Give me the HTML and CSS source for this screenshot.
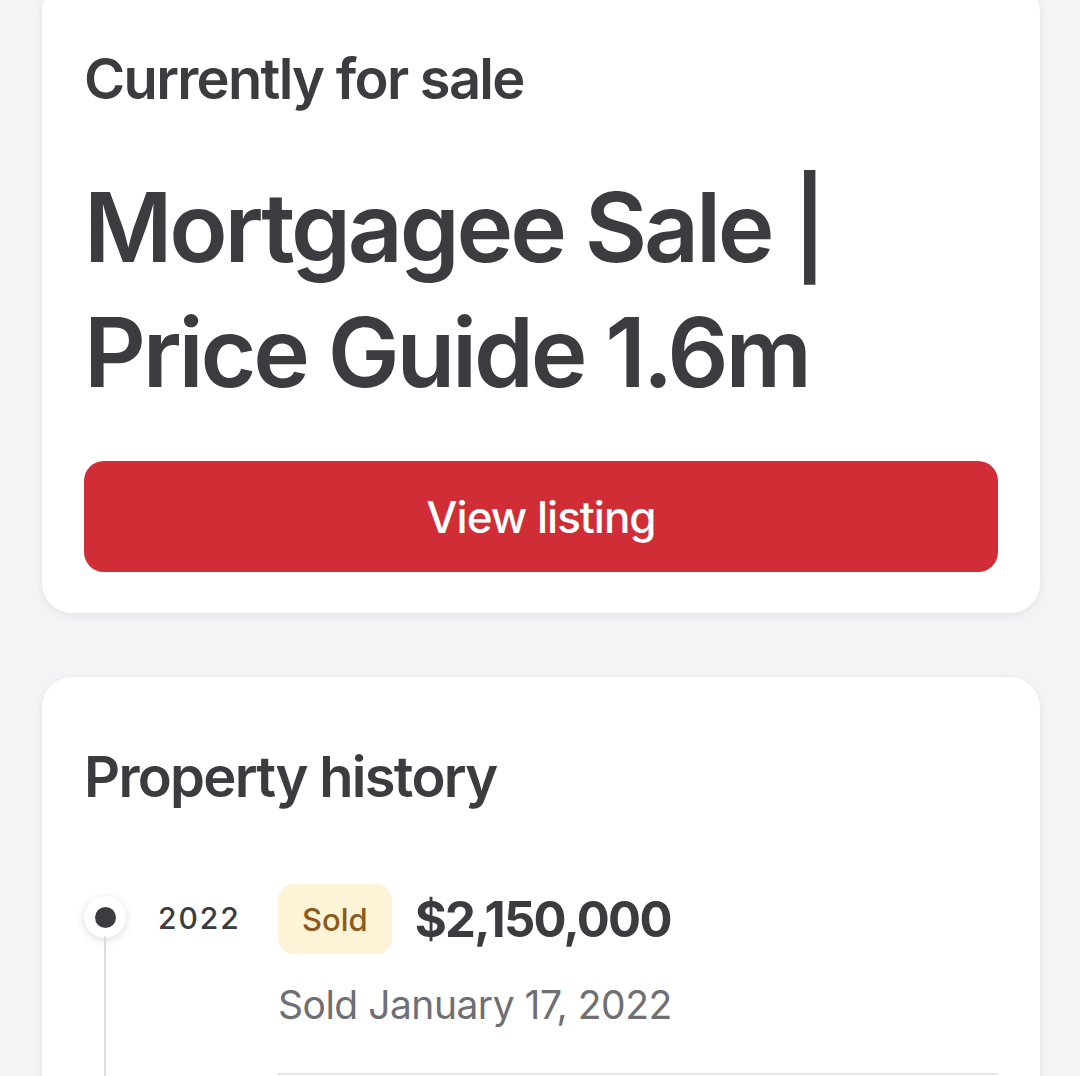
FILE: index.html
```html
<!DOCTYPE html>
<html lang="en">
<head>
<meta charset="utf-8">
<link rel="stylesheet" href="styles.css">
</head>
<body>
<main class="page">
  <section class="card card-sale">
    <h2 class="card-label">Currently for sale</h2>
    <h1 class="listing-title">Mortgagee Sale | Price Guide 1.6m</h1>
    <a class="btn-primary" href="#">View listing</a>
  </section>
  <section class="card card-history">
    <h2 class="section-title">Property history</h2>
    <ol class="timeline">
      <li class="tl-item">
        <div class="tl-marker"><span class="tl-dot"></span></div>
        <div class="tl-year">2022</div>
        <div class="tl-body">
          <div class="tl-head">
            <span class="badge-sold">Sold</span>
            <span class="tl-price">$2,150,000</span>
          </div>
          <div class="tl-desc">Sold January 17, 2022</div>
          <div class="tl-divider"></div>
        </div>
      </li>
    </ol>
  </section>
</main>
</body>
</html>
```
FILE: styles.css
```css
* { box-sizing: border-box; }
html, body { margin: 0; padding: 0; }
body {
  background: #f4f4f6;
  font-family: Inter, "Noto Sans", sans-serif;
  color: #3b3b40;
  height: 1076px;
  overflow: hidden;
}
.page {
  padding: 0 40px 0 42px;
  display: flex;
  flex-direction: column;
  gap: 64px;
  margin-top: -18px;
}
.card {
  background: #fff;
  border-radius: 30px;
  box-shadow: 0 2px 8px rgba(0,0,0,0.08);
  padding: 0 42px;
}
.card-sale {
  padding-top: 64px;
  padding-bottom: 41px;
  border-top: 3px solid #fffef3;
}
.card-label {
  margin: 0;
  font-size: 56px;
  font-weight: 600;
  letter-spacing: -1.7px;
  line-height: 60px;
}
.listing-title {
  margin: 56px 0 0;
  font-size: 96px;
  font-weight: 600;
  letter-spacing: -3.2px;
  line-height: 125px;
}
.btn-primary {
  display: flex;
  align-items: center;
  justify-content: center;
  margin-top: 46px;
  height: 111px;
  border-radius: 20px;
  background: #d02d36;
  color: #fff;
  text-decoration: none;
  font-size: 44px;
  font-weight: 500;
  letter-spacing: -1px;
}
.card-history {
  padding-top: 70px;
  min-height: 600px;
}
.section-title {
  margin: 0;
  font-size: 56px;
  font-weight: 600;
  letter-spacing: -1.7px;
  line-height: 60px;
}
.timeline {
  list-style: none;
  margin: 77px 0 0;
  padding: 0;
}
.tl-item {
  display: grid;
  grid-template-columns: 42px 152px 1fr;
  position: relative;
}
.tl-marker {
  position: relative;
  display: flex;
  justify-content: center;
  align-items: flex-start;
}
.tl-marker::after {
  content: "";
  position: absolute;
  top: 52px;
  bottom: -200px;
  left: 20px;
  width: 2px;
  background: #dcdcdf;
}
.tl-dot {
  margin-top: 12px;
  width: 42px;
  height: 42px;
  border-radius: 50%;
  background: #fff;
  box-shadow: 0 2px 8px rgba(0,0,0,0.14);
  display: flex;
  align-items: center;
  justify-content: center;
}
.tl-dot::before {
  content: "";
  width: 21px;
  height: 21px;
  border-radius: 50%;
  background: #3b3b40;
}
.tl-year {
  padding-left: 32px;
  padding-top: 14px;
  font-size: 30px;
  font-weight: 500;
  letter-spacing: 2px;
  line-height: 40px;
}
.tl-head {
  display: flex;
  align-items: center;
  gap: 23px;
}
.badge-sold {
  display: inline-flex;
  align-items: center;
  padding: 0 24px;
  height: 70px;
  border-radius: 16px;
  background: #fdf3d7;
  color: #8b5a1c;
  font-size: 31px;
  font-weight: 500;
}
.tl-price {
  font-size: 49px;
  font-weight: 700;
  letter-spacing: -1.7px;
}
.tl-desc {
  margin-top: 27px;
  font-size: 39px;
  color: #6e6e73;
  letter-spacing: -0.5px;
}
.tl-divider {
  margin-top: 45px;
  height: 2px;
  background: #e6e6e8;
}
```
